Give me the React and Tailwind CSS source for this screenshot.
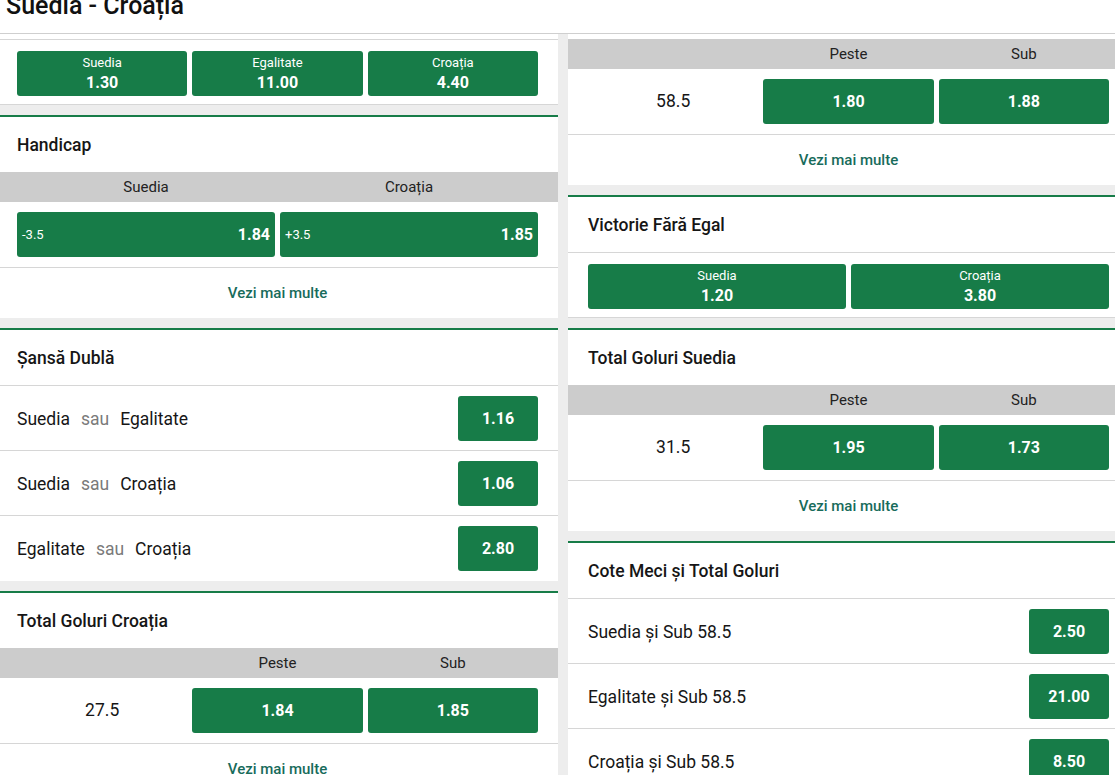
import React from "react";

const G = "bg-[#177c48]";

function OddBtn({ label, odd }) {
  return (
    <div className={`${G} h-[45px] rounded-[3px] flex flex-col items-center justify-center text-white`}>
      <div className="text-[13px] leading-[16px]">{label}</div>
      <div className="text-[16px] font-bold leading-[20px] mt-[2px]">{odd}</div>
    </div>
  );
}

function SingleBtn({ odd }) {
  return (
    <div className={`${G} h-[45px] rounded-[3px] flex items-center justify-center text-white text-[16px] font-bold`}>
      {odd}
    </div>
  );
}

function Title({ children, border }) {
  return (
    <div className={`${border ? "h-[56px] border-b border-[#d6d6d6]" : "h-[55px]"} flex items-center px-[20px] pt-[2px] text-[17.5px] font-medium text-[#161616]`}>
      {children}
    </div>
  );
}

function Vezi() {
  return (
    <div className="h-[50px] flex items-center justify-center text-[15px] font-medium text-[#186b5b]">
      Vezi mai multe
    </div>
  );
}

function OUHeader() {
  return (
    <div className="h-[30px] bg-[#cccccc] px-[20px] grid grid-cols-3 gap-[5px] items-center text-[15px] text-[#222]">
      <div></div>
      <div className="text-center">Peste</div>
      <div className="text-center">Sub</div>
    </div>
  );
}

function OURow({ line, over, under }) {
  return (
    <div className="pt-[10px] pb-[10px] border-b border-[#d6d6d6] px-[20px] grid grid-cols-3 gap-[5px] items-center">
      <div className="text-center text-[17.5px] text-[#161616]">{line}</div>
      <SingleBtn odd={over} />
      <SingleBtn odd={under} />
    </div>
  );
}

function ListRow({ children, odd, last }) {
  return (
    <div className={`pt-[10px] ${last ? "pb-[10px]" : "pb-[9px] border-b border-[#d6d6d6]"} px-[20px] flex items-center justify-between`}>
      <div className="text-[17.5px] text-[#161616] flex items-center pt-[2px]">{children}</div>
      <div className="w-[80px]">
        <SingleBtn odd={odd} />
      </div>
    </div>
  );
}

function Card({ children }) {
  return <div className="bg-white border-t-2 border-[#177c48]">{children}</div>;
}

function Sau() {
  return <span className="text-[#7a7a7a] mx-[11px]">sau</span>;
}

export default function App() {
  return (
    <div className="w-[1115px] h-[775px] overflow-hidden bg-[#ededed] font-['Roboto',sans-serif]">
      <div className="h-[34px] bg-white border-b border-[#cfcfcf] overflow-hidden">
        <div className="pl-[6px] mt-[-7px] text-[25px] leading-none font-medium text-[#111]">Suedia - Croația</div>
      </div>
      <div className="flex gap-[10px] ml-[-3px]">
        {/* Left column */}
        <div className="w-[561px] shrink-0 flex flex-col gap-[10px]">
          <div className="bg-white">
            <div className="h-[6px] border-b border-[#d6d6d6]"></div>
            <div className="pt-[11px] pb-[8px] border-b border-[#d6d6d6] px-[20px] grid grid-cols-3 gap-[5px]">
              <OddBtn label="Suedia" odd="1.30" />
              <OddBtn label="Egalitate" odd="11.00" />
              <OddBtn label="Croația" odd="4.40" />
            </div>
          </div>

          <Card>
            <Title>Handicap</Title>
            <div className="h-[30px] bg-[#cccccc] px-[20px] grid grid-cols-2 gap-[5px] items-center text-[15px] text-[#222]">
              <div className="text-center">Suedia</div>
              <div className="text-center">Croația</div>
            </div>
            <div className="pt-[10px] pb-[10px] border-b border-[#d6d6d6] px-[20px] grid grid-cols-2 gap-[5px]">
              <div className={`${G} h-[45px] rounded-[3px] flex items-center justify-between pl-[5px] pr-[5px] text-white`}>
                <span className="text-[13px]">-3.5</span>
                <span className="text-[16px] font-bold">1.84</span>
              </div>
              <div className={`${G} h-[45px] rounded-[3px] flex items-center justify-between pl-[5px] pr-[5px] text-white`}>
                <span className="text-[13px]">+3.5</span>
                <span className="text-[16px] font-bold">1.85</span>
              </div>
            </div>
            <Vezi />
          </Card>

          <Card>
            <Title border>Șansă Dublă</Title>
            <ListRow odd="1.16">
              <span>Suedia</span><Sau /><span>Egalitate</span>
            </ListRow>
            <ListRow odd="1.06">
              <span>Suedia</span><Sau /><span>Croația</span>
            </ListRow>
            <ListRow odd="2.80" last>
              <span>Egalitate</span><Sau /><span>Croația</span>
            </ListRow>
          </Card>

          <Card>
            <Title>Total Goluri Croația</Title>
            <OUHeader />
            <OURow line="27.5" over="1.84" under="1.85" />
            <Vezi />
          </Card>
        </div>

        {/* Right column */}
        <div className="w-[561px] shrink-0 flex flex-col gap-[10px]">
          <div className="bg-white">
            <div className="h-[5px]"></div>
            <OUHeader />
            <OURow line="58.5" over="1.80" under="1.88" />
            <Vezi />
          </div>

          <Card>
            <Title border>Victorie Fără Egal</Title>
            <div className="pt-[11px] pb-[8px] border-b border-[#d6d6d6] px-[20px] grid grid-cols-2 gap-[5px]">
              <OddBtn label="Suedia" odd="1.20" />
              <OddBtn label="Croația" odd="3.80" />
            </div>
          </Card>

          <Card>
            <Title>Total Goluri Suedia</Title>
            <OUHeader />
            <OURow line="31.5" over="1.95" under="1.73" />
            <Vezi />
          </Card>

          <Card>
            <Title border>Cote Meci și Total Goluri</Title>
            <ListRow odd="2.50">Suedia și Sub 58.5</ListRow>
            <ListRow odd="21.00">Egalitate și Sub 58.5</ListRow>
            <ListRow odd="8.50">Croația și Sub 58.5</ListRow>
          </Card>
        </div>
      </div>
    </div>
  );
}
